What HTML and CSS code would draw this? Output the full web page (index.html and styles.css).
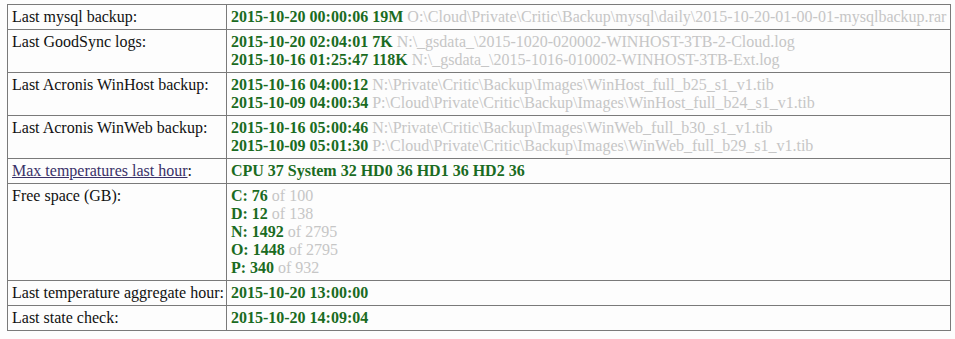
FILE: index.html
```html
<!DOCTYPE html>
<html>
<head>
<meta charset="utf-8">
<title>Status</title>
<link rel="stylesheet" href="styles.css">
</head>
<body>
<table class="status">
  <tr>
    <td class="label">Last mysql backup:</td>
    <td class="value"><b class="ok">2015-10-20 00:00:06 19M</b> <span class="dim">O:\Cloud\Private\Critic\Backup\mysql\daily\2015-10-20-01-00-01-mysqlbackup.rar</span></td>
  </tr>
  <tr>
    <td class="label">Last GoodSync logs:</td>
    <td class="value"><b class="ok">2015-10-20 02:04:01 7K</b> <span class="dim">N:\_gsdata_\2015-1020-020002-WINHOST-3TB-2-Cloud.log</span><br><b class="ok">2015-10-16 01:25:47 118K</b> <span class="dim">N:\_gsdata_\2015-1016-010002-WINHOST-3TB-Ext.log</span></td>
  </tr>
  <tr>
    <td class="label">Last Acronis WinHost backup:</td>
    <td class="value"><b class="ok">2015-10-16 04:00:12</b> <span class="dim">N:\Private\Critic\Backup\Images\WinHost_full_b25_s1_v1.tib</span><br><b class="ok">2015-10-09 04:00:34</b> <span class="dim">P:\Cloud\Private\Critic\Backup\Images\WinHost_full_b24_s1_v1.tib</span></td>
  </tr>
  <tr>
    <td class="label">Last Acronis WinWeb backup:</td>
    <td class="value"><b class="ok">2015-10-16 05:00:46</b> <span class="dim">N:\Private\Critic\Backup\Images\WinWeb_full_b30_s1_v1.tib</span><br><b class="ok">2015-10-09 05:01:30</b> <span class="dim">P:\Cloud\Private\Critic\Backup\Images\WinWeb_full_b29_s1_v1.tib</span></td>
  </tr>
  <tr>
    <td class="label"><a class="link" href="#">Max temperatures last hour</a>:</td>
    <td class="value"><b class="ok">CPU 37 System 32 HD0 36 HD1 36 HD2 36</b></td>
  </tr>
  <tr>
    <td class="label">Free space (GB):</td>
    <td class="value"><b class="ok">C: 76</b> <span class="dim">of 100</span><br><b class="ok">D: 12</b> <span class="dim">of 138</span><br><b class="ok">N: 1492</b> <span class="dim">of 2795</span><br><b class="ok">O: 1448</b> <span class="dim">of 2795</span><br><b class="ok">P: 340</b> <span class="dim">of 932</span></td>
  </tr>
  <tr>
    <td class="label">Last temperature aggregate hour:</td>
    <td class="value"><b class="ok">2015-10-20 13:00:00</b></td>
  </tr>
  <tr>
    <td class="label">Last state check:</td>
    <td class="value"><b class="ok">2015-10-20 14:09:04</b></td>
  </tr>
</table>
</body>
</html>
```
FILE: styles.css
```css
html, body {
  background: #fdfdfd;
}
body {
  margin: 4px 0 0 7px;
  font-family: "Liberation Serif", "Times New Roman", serif;
  font-size: 16px;
  line-height: 18px;
  color: #111;
}
.status {
  border-collapse: collapse;
  width: 942px;
  border: 1px solid #222;
}
.status td {
  border: 1px solid #7a7a7a;
  padding: 3px 4px;
  vertical-align: top;
  white-space: nowrap;
}
.status td.label {
  width: 206px;
  padding-right: 2px;
}
.ok {
  color: #1a6b22;
  font-weight: bold;
}
.dim {
  color: #c6c6c6;
}
.link {
  color: #3a3168;
  text-decoration: underline;
}
```
